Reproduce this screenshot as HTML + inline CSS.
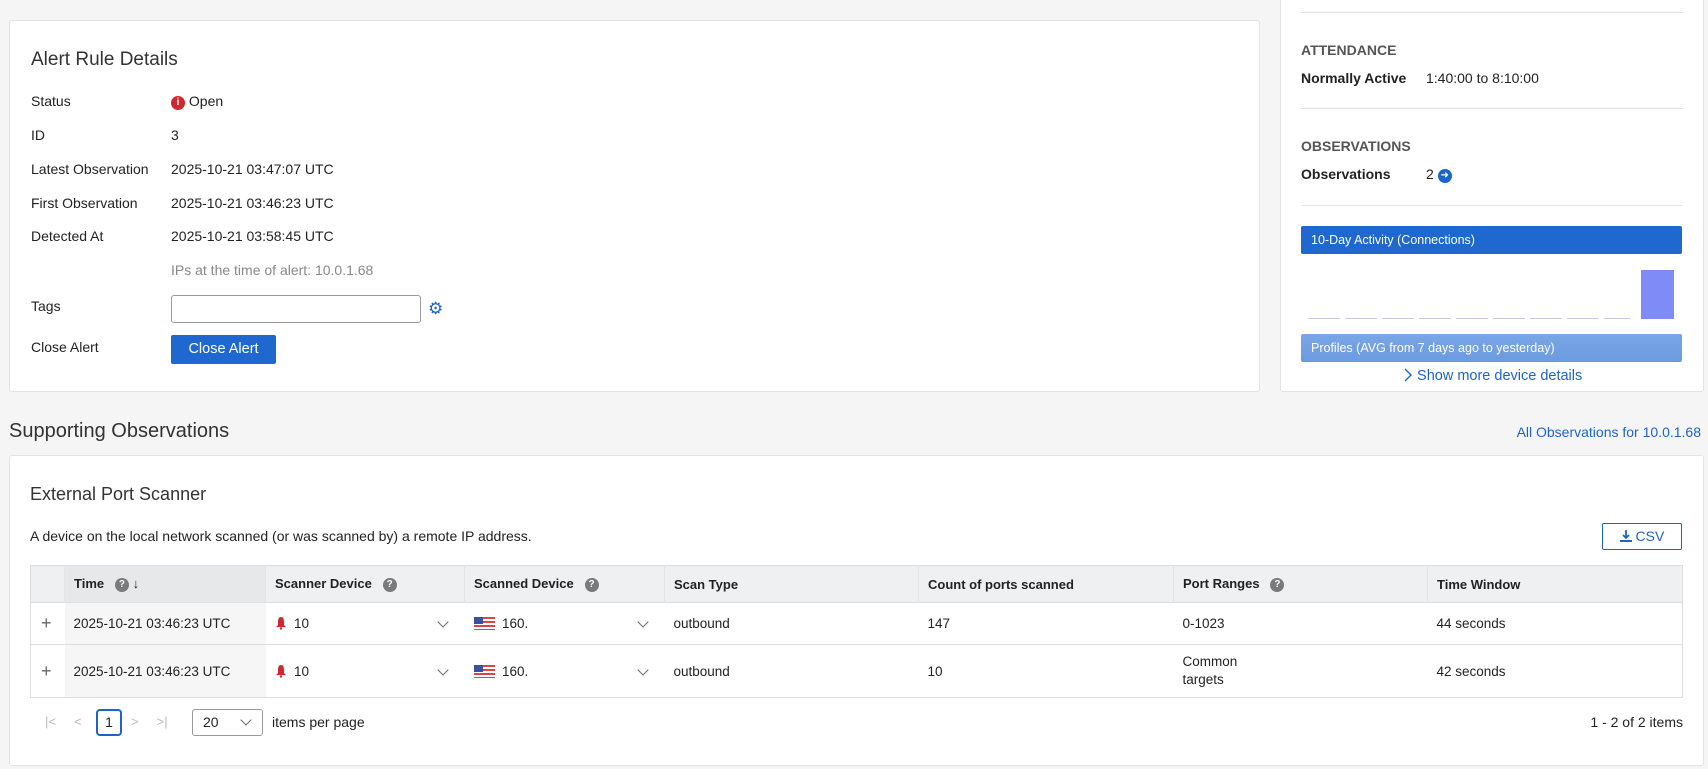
<!DOCTYPE html>
<html><head><meta charset="utf-8"><style>
*{box-sizing:border-box;margin:0;padding:0}
body{width:1708px;height:769px;background:#f5f5f5;font-family:"Liberation Sans",sans-serif;font-size:14px;color:#222;position:relative;overflow:hidden}
.a{position:absolute;white-space:nowrap}
.card{position:absolute;background:#fff;border:1px solid #e3e3e3;border-radius:3px}
.lbl{left:21px}
.val{left:161px}
.hr{position:absolute;left:20px;right:20px;height:1px;background:#e2e2e2}
.q{display:inline-block;width:14px;height:14px;border-radius:50%;background:#7a7a7a;color:#fff;font-size:10px;font-weight:bold;text-align:center;line-height:14px;vertical-align:middle}
table{position:absolute;left:20px;top:109px;width:1653px;border-collapse:collapse;border:1px solid #ddd}
th{background:#eef0f2;height:37px;text-align:left;font-size:13px;font-weight:bold;padding-left:9px;border-left:1px solid #e4e4e4}
td{padding-left:9px;border-top:1px solid #ddd;font-size:13.5px}
.tc{background:#f6f6f6}
.chev{display:inline-block;width:8px;height:8px;border-right:1.3px solid #666;border-bottom:1.3px solid #666;transform:rotate(45deg)}
.fr{float:right;margin-right:18px;margin-top:2px}
.flag{display:inline-block;width:21px;height:13px;background:repeating-linear-gradient(#d44 0 2px,#fff 2px 4px);position:relative;vertical-align:-2px}
.flag span{position:absolute;left:0;top:0;width:9px;height:7px;background:#3b4fa0}
</style></head><body>

<div class="card" style="left:9px;top:20px;width:1251px;height:372px">
 <div class="a lbl" style="top:28px;font-size:19px;color:#333">Alert Rule Details</div>
 <div class="a lbl" style="top:72px">Status</div>
 <div class="a val" style="top:72px"><span style="display:inline-block;width:14px;height:14px;border-radius:50%;background:#d0282e;color:#fff;font-size:10px;font-weight:bold;text-align:center;line-height:14px;vertical-align:1px">i</span> Open</div>
 <div class="a lbl" style="top:106px">ID</div><div class="a val" style="top:106px">3</div>
 <div class="a lbl" style="top:140px">Latest Observation</div><div class="a val" style="top:140px">2025-10-21 03:47:07 UTC</div>
 <div class="a lbl" style="top:174px">First Observation</div><div class="a val" style="top:174px">2025-10-21 03:46:23 UTC</div>
 <div class="a lbl" style="top:207px">Detected At</div><div class="a val" style="top:207px">2025-10-21 03:58:45 UTC</div>
 <div class="a val" style="top:241px;color:#888">IPs at the time of alert: 10.0.1.68</div>
 <div class="a lbl" style="top:277px">Tags</div>
 <div class="a" style="left:161px;top:274px;width:250px;height:28px;border:1px solid #999;border-radius:3px"></div>
 <div class="a" style="left:418px;top:278px;color:#1d64c8;font-size:17px">⚙</div>
 <div class="a lbl" style="top:318px">Close Alert</div>
 <div class="a" style="left:161px;top:314px;width:105px;height:29px;background:#1f68cf;border-radius:2px;color:#fff;text-align:center;line-height:29px;font-size:14.5px">Close Alert</div>
</div>

<div class="card" style="left:1280px;top:-2px;width:424px;height:394px">
 <div class="hr" style="top:13px"></div>
 <div class="a" style="left:20px;top:43px;font-weight:bold;color:#555;font-size:14px">ATTENDANCE</div>
 <div class="a" style="left:20px;top:71px;font-weight:bold">Normally Active</div>
 <div class="a" style="left:145px;top:71px">1:40:00 to 8:10:00</div>
 <div class="hr" style="top:109px"></div>
 <div class="a" style="left:20px;top:139px;font-weight:bold;color:#555">OBSERVATIONS</div>
 <div class="a" style="left:20px;top:167px;font-weight:bold">Observations</div>
 <div class="a" style="left:145px;top:167px">2 <span style="display:inline-block;width:14px;height:14px;border-radius:50%;background:#1d64c8;color:#fff;font-size:10px;text-align:center;line-height:14px;vertical-align:1px">➜</span></div>
 <div class="hr" style="top:206px"></div>
 <div class="a" style="left:20px;top:227px;width:381px;height:28px;background:#1f68cf;border-radius:2px;color:#fff;font-size:12.5px;line-height:28px;padding-left:10px">10-Day Activity (Connections)</div>
 <div class="a" style="left:27px;top:319px;width:323px;height:1px;background:repeating-linear-gradient(90deg,#c9c9e6 0 32px,transparent 32px 37px)"></div>
 <div class="a" style="left:360px;top:271px;width:33px;height:49px;background:#7f8cf8"></div>
 <div class="a" style="left:20px;top:335px;width:381px;height:28px;background:linear-gradient(#7aa6e6,#6b9ae0);border-radius:2px;color:#fff;font-size:12.5px;line-height:28px;padding-left:10px">Profiles (AVG from 7 days ago to yesterday)</div>
 <div class="a" style="left:122px;top:369px;color:#1d64c8;font-size:14.5px"><svg width="10" height="14" viewBox="0 0 10 14" style="vertical-align:-2px"><path d="M2 1l6 6-6 6" fill="none" stroke="#1d64c8" stroke-width="1.4"/></svg> Show more device details</div>
</div>

<div class="a" style="left:9px;top:420px;font-size:20px;color:#333">Supporting Observations</div>
<div class="a" style="right:7px;top:424px;font-size:14px;color:#1d64c8">All Observations for 10.0.1.68</div>

<div class="card" style="left:9px;top:455px;width:1695px;height:311px">
 <div class="a" style="left:20px;top:28px;font-size:18px;color:#333">External Port Scanner</div>
 <div class="a" style="left:20px;top:72px">A device on the local network scanned (or was scanned by) a remote IP address.</div>
 <div class="a" style="left:1592px;top:67px;width:80px;height:27px;border:1px solid #1d64c8;border-radius:2px;color:#1d64c8;text-align:center;line-height:25px;font-size:14px"><svg width="12" height="14" viewBox="0 0 12 14" style="vertical-align:-2px"><path d="M6 1v8M3 6l3 3 3-3" fill="none" stroke="#1d64c8" stroke-width="1.8"/><rect x="0" y="11" width="12" height="2" fill="#1d64c8"/></svg> CSV</div>
 <table>
  <tr><th style="width:34px;border-left:none"></th><th class="tc" style="width:201px;background:#e6e8ea">Time &nbsp; <span class="q">?</span> ↓</th><th style="width:199px">Scanner Device &nbsp; <span class="q">?</span></th><th style="width:200px">Scanned Device &nbsp; <span class="q">?</span></th><th style="width:254px">Scan Type</th><th style="width:255px">Count of ports scanned</th><th style="width:254px">Port Ranges &nbsp; <span class="q">?</span></th><th>Time Window</th></tr>
  <tr style="height:42px"><td style="font-size:18px;color:#666;padding-left:10px">+</td><td class="tc">2025-10-21 03:46:23 UTC</td><td><svg width="12" height="14" viewBox="0 0 12 14" style="vertical-align:-2px"><path d="M6 1C3.5 1 3 3.5 3 6v3L1 11h10L9 9V6C9 3.5 8.5 1 6 1z" fill="#d0282e"/><circle cx="6" cy="12.5" r="1.2" fill="#d0282e"/></svg>&nbsp; 10 <span class="chev fr"></span></td><td><span class="flag"><span></span></span>&nbsp; 160. <span class="chev fr"></span></td><td>outbound</td><td>147</td><td>0-1023</td><td>44 seconds</td></tr>
  <tr style="height:53px"><td style="font-size:18px;color:#666;padding-left:10px">+</td><td class="tc">2025-10-21 03:46:23 UTC</td><td><svg width="12" height="14" viewBox="0 0 12 14" style="vertical-align:-2px"><path d="M6 1C3.5 1 3 3.5 3 6v3L1 11h10L9 9V6C9 3.5 8.5 1 6 1z" fill="#d0282e"/><circle cx="6" cy="12.5" r="1.2" fill="#d0282e"/></svg>&nbsp; 10 <span class="chev fr"></span></td><td><span class="flag"><span></span></span>&nbsp; 160. <span class="chev fr"></span></td><td>outbound</td><td>10</td><td style="line-height:18px">Common<br>targets</td><td>42 seconds</td></tr>
 </table>
 <div class="a" style="left:35px;top:258px;color:#bbb;font-size:13px">|&lt; &nbsp;&nbsp;&nbsp; &lt;</div>
 <div class="a" style="left:86px;top:253px;width:26px;height:27px;border:2px solid #1d64c8;border-radius:4px;text-align:center;line-height:23px">1</div>
 <div class="a" style="left:121px;top:258px;color:#bbb;font-size:13px">&gt; &nbsp;&nbsp;&nbsp; &gt;|</div>
 <div class="a" style="left:182px;top:253px;width:71px;height:27px;border:1px solid #999;border-radius:3px;padding-left:10px;line-height:25px">20 <span class="chev" style="margin-left:20px;vertical-align:3px"></span></div>
 <div class="a" style="left:262px;top:258px">items per page</div>
 <div class="a" style="right:20px;top:258px">1 - 2 of 2 items</div>
</div>
</body></html>
